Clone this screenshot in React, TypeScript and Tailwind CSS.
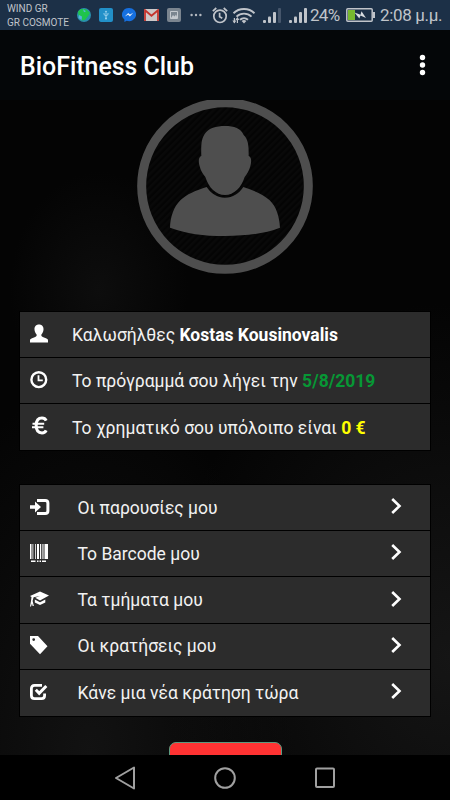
import type { ReactNode } from "react";

function StatusBar() {
  return (
    <div className="h-[30px] bg-[#1c3047] flex items-center pl-[7px] text-[#c0c4ca] shrink-0">
      <div className="w-[70px] text-[10px] leading-[14px] whitespace-nowrap pt-[2px]">
        <p>WIND GR</p>
        <p>GR COSMOTE</p>
      </div>

      <svg className="w-[14px] h-[14px]" viewBox="0 0 14 14">
        <circle cx="7" cy="7" r="7" fill="#2a8fae" />
        <path d="M1 3.4 4 1l5 .2 4 3.6-2 3.4L8 12l-3.6.6L5 9 1.6 7.4z" fill="#1fc44c" />
        <path d="m2 7 3 1.6L4.6 12 1.5 10zM6 1.2l3 2-2 1z" fill="#57b5d8" />
      </svg>
      <svg className="w-[14px] h-[14px] ml-2" viewBox="0 0 14 14">
        <rect width="14" height="14" rx="2" fill="#2290c8" />
        <path d="M7 10.5V3.6M5 5v1.6L7 8l2-1.4V5" fill="none" stroke="#9ed4ee" strokeWidth="0.9" />
        <circle cx="7" cy="10.6" r="1" fill="#9ed4ee" />
        <path d="m5.8 4 1.2-1.6L8.2 4z" fill="#9ed4ee" />
      </svg>
      <svg className="w-[14px] h-[14px] ml-[9px]" viewBox="0 0 14 14">
        <path d="M7 0a7 6.6 0 0 0-4.6 11.6V14l2.3-1.2A7 6.6 0 1 0 7 0z" fill="#1670e0" />
        <path d="m2.8 8.6 3.4-3.7L8 6.6l3.2-1.8L7.9 8.5 6.1 6.8z" fill="#e6edf6" />
      </svg>
      <svg className="w-[15px] h-[12px] ml-2" viewBox="0 0 15 12">
        <rect width="15" height="12" rx="1" fill="#ccc8c8" />
        <path d="M1 12V1.2l6.5 5.6L14 1.2V12" fill="none" stroke="#c4352e" strokeWidth="1.8" />
      </svg>
      <svg className="w-[14px] h-[14px] ml-2" viewBox="0 0 14 14">
        <rect width="14" height="14" rx="2" fill="#7b858f" />
        <path d="M3.5 3.5h7v7h-7z" fill="none" stroke="#c5c9ce" />
        <path d="m4 10 2-3 1.5 1.5L9 6.5l1.5 3.5z" fill="#c5c9ce" />
      </svg>
      <svg className="w-[12px] h-[4px] ml-[9px]" viewBox="0 0 12 4" fill="#b4b9c1">
        <circle cx="1.6" cy="2" r="1.2" />
        <circle cx="6" cy="2" r="1.2" />
        <circle cx="10.4" cy="2" r="1.2" />
      </svg>
      <svg className="w-[16px] h-[17px] ml-[10px]" viewBox="0 0 16 17" fill="none" stroke="#c0c4ca" strokeWidth="1.7">
        <circle cx="8" cy="9.3" r="6.2" />
        <path d="M7.6 5.8v3.9l2.7 1.5M.8 4.1 4.3 1M15.2 4.1 11.7 1" />
      </svg>
      <svg className="w-[24px] h-[17px] ml-1" viewBox="0 0 24 17" fill="none" stroke="#c0c4ca" strokeWidth="1.9">
        <path d="M1.5 6.2a15.3 15.3 0 0 1 21 0M4.5 9.6a11 11 0 0 1 15 0M8 12.7a6 6 0 0 1 8 0" />
        <path d="m12 16.5-2.4-2.4a3.4 3.4 0 0 1 4.8 0z" fill="#c0c4ca" stroke="none" />
        <path d="M2.4 16v-5M5.4 11v5" strokeWidth="1.2" />
        <path d="m.4 13.5 2 3 2-3zM3.4 13l2-3 2 3z" fill="#c0c4ca" stroke="none" />
      </svg>
      <Signal last="#46566b" />
      <Signal last="#c0c4ca" />
      <span className="text-[17px] leading-[30px] ml-[2px] w-[36px] whitespace-nowrap tracking-[-0.7px]">24%</span>
      <svg className="w-[29px] h-[14px]" viewBox="0 0 29 14">
        <rect x=".8" y=".8" width="25.4" height="12.4" rx="1" fill="none" stroke="#c0c4ca" strokeWidth="1.5" />
        <path d="M27 4h2v6h-2z" fill="#c0c4ca" />
        <path d="M2 2h7v10H2z" fill="#77b82e" />
        <path d="m8.5 4.5 6 2.2 1-3.5 4.5 6.8-5.5-2.6-1.2 3.2z" fill="#d8dce0" />
      </svg>
      <span className="text-[17px] leading-[30px] ml-[5px] whitespace-nowrap tracking-[-0.35px]">2:08 μ.μ.</span>
    </div>
  );
}

function Signal({ last }: { last: string }) {
  return (
    <svg className="w-[19px] h-[16px] ml-[7px]" viewBox="0 0 19 16" fill="#c0c4ca">
      <rect x="0" y="13" width="3" height="3" rx="1" />
      <rect x="5" y="9.5" width="3" height="6.5" rx="1" />
      <rect x="10" y="5" width="3" height="11" rx="1" />
      <rect x="15" y="1" width="3" height="15" rx="1" fill={last} />
    </svg>
  );
}

function Avatar() {
  return (
    <svg className="w-[210px] h-[195px] mx-auto -mt-[10px] shrink-0" viewBox="0 0 630 585">
      <defs>
        <pattern id="stripes" width="14" height="14" patternUnits="userSpaceOnUse" patternTransform="rotate(45)">
          <rect width="7" height="14" fill="#090909" />
        </pattern>
      </defs>
      <circle cx="315" cy="288" r="262" fill="url(#stripes)" />
      <circle cx="315" cy="288" r="250" fill="none" stroke="#4e4e4e" strokeWidth="27" />
      <g fill="#4e4e4e">
        <path d="M315 108c27 0 48 7 56 27 12 12 16 28 15 63 9 3 9 17 5 31-4 14-10 24-17 32-10 32-32 54-59 54s-49-22-59-54c-8-9-14-19-17-32-4-14-4-28 5-31-1-35 0-50 10-66 12-18 34-24 61-24z" />
        <path d="M260 291c13 20 32 32 55 32s42-12 55-32c32 11 61 22 79 40 21 20 29 50 31 82-48 18-100 25-165 25s-117-7-165-25c1-32 11-62 31-82 18-18 47-30 79-40z" />
      </g>
    </svg>
  );
}

function Icon({ children }: { children: ReactNode }) {
  return (
    <svg className="w-[20px] h-[20px] shrink-0 mb-[2px]" viewBox="0 0 20 20" fill="#fff">
      {children}
    </svg>
  );
}

const icons = {
  user: (
    <path d="M9 .5C5.9.5 4.300 2.700 4.500 5.500c.1 2.200 1 3.800 2.100 5 .3 1.400-.2 2-1.400 2.500L1.500 14.500C.4 15 0 15.500 0 16.500v2h18v-2c0-1-.4-1.500-1.500-2L12.800 13c-1.200-.5-1.700-1.100-1.400-2.500 1.100-1.200 2-2.800 2.100-5C13.700 2.700 12.100.5 9 .5z" />
  ),
  clock: (
    <g fill="none" stroke="#fff">
      <circle cx="8.8" cy="9.7" r="7.4" strokeWidth="2.4" />
      <path d="M8.500 5.200v5.200h4.300" strokeWidth="1.8" />
    </g>
  ),
  euro: (
    <g fill="none" stroke="#fff">
      <path d="M16.200 4.700C15.400 2.900 14 2.100 12 2.100c-3.800 0-5.800 2.900-5.800 7.400s2 7.400 5.800 7.400c2 0 3.400-.8 4.200-2.600" strokeWidth="3" />
      <path d="M2.500 7.700h11.700M2 11.200h11.400" strokeWidth="1.9" />
    </g>
  ),
  login: (
    <>
      <path d="M0 8.300h5V4.500l6 5.500-6 5.500v-3.800H0z" />
      <path d="M7 3.400h8.200c1.800 0 2.700 1 2.700 2.600v8c0 1.600-.9 2.600-2.700 2.600H7" fill="none" stroke="#fff" strokeWidth="3" />
    </>
  ),
  barcode: (
    <>
      <path d="M0 1h1.500v15H0zM2.500 1h.8v15h-.8zM5 1h.8v15H5zM7 1h2v15H7zM10 1h1v15h-1zM11.800 1h.8v15h-.8zM13.500 1h1v15h-1zM15 1h3v15h-3z" />
      <path d="M1 17.500h4.500V19H1zM7 17.500h1.500V19H7zM9.500 17.500H11V19H9.500zM12 17.500h4V19h-4z" />
    </>
  ),
  cap: (
    <>
      <path d="M0 7 10 2.500 19 6.500 10 11.500 5.200 8.800 10 7 3.600 8.300 2.600 12l1.300 5H2.600L2 14.500 1 17.500H0l1-5.500.5-4z" />
      <path d="M4.800 10.500 10 13.300l5.300-2.900v3L10 16l-5.200-2.600z" />
    </>
  ),
  tag: (
    <path fillRule="evenodd" d="M0 1h8l9.500 10.200L10 19.300 0 8.800zm3.700 2.200a1.400 1.400 0 1 0 0 2.800 1.400 1.400 0 0 0 0-2.800z" />
  ),
  check: (
    <g fill="none" stroke="#fff">
      <path d="M12 3.400H4.500c-2 0-3.100 1.100-3.100 3.100v7c0 2 1.100 3.100 3.100 3.100h7c2 0 3.100-1.100 3.100-3.100v-2" strokeWidth="2.8" />
      <path d="m5.800 7.800 3.400 3.500L16.300 4" strokeWidth="3" />
    </g>
  ),
};

const info = [
  { icon: icons.user, text: "Καλωσήλθες", value: "Kostas Kousinovalis", color: "text-white" },
  { icon: icons.clock, text: "Το πρόγραμμά σου λήγει την", value: "5/8/2019", color: "text-[#079735]" },
  { icon: icons.euro, text: "Το χρηματικό σου υπόλοιπο είναι", value: "0 €", color: "text-[#ffff00]" },
];

const menu = [
  { icon: icons.login, label: "Οι παρουσίες μου" },
  { icon: icons.barcode, label: "Το Barcode μου" },
  { icon: icons.cap, label: "Τα τμήματα μου" },
  { icon: icons.tag, label: "Οι κρατήσεις μου" },
  { icon: icons.check, label: "Κάνε μια νέα κράτηση τώρα" },
];

export default function App() {
  return (
    <div className="w-[450px] h-[800px] flex flex-col overflow-hidden bg-black font-['Roboto',sans-serif]">
      <StatusBar />

      <header className="h-[70px] shrink-0 bg-[#040608] flex items-center justify-between pl-5 pr-6">
        <h1 className="text-white text-[24.9px] font-medium leading-none mt-[4px]">BioFitness Club</h1>
        <svg className="w-[7px] h-[22px]" viewBox="0 0 7 22" fill="#fff">
          <circle cx="3.5" cy="3.5" r="2.7" />
          <circle cx="3.5" cy="11" r="2.7" />
          <circle cx="3.5" cy="18.5" r="2.7" />
        </svg>
      </header>

      <main className="h-[655px] shrink-0 flex flex-col overflow-hidden bg-[#040404] bg-[radial-gradient(ellipse_at_100%_85%,#151515_0%,transparent_45%),radial-gradient(ellipse_at_20%_100%,#121212_0%,transparent_40%),radial-gradient(ellipse_at_22%_29%,#0d0d0d_0%,transparent_18%)]">
        <Avatar />

        <ul className="mx-5 mt-[27px] text-[17.5px] text-[#f2f2f2] bg-[#2c2c2c] shadow-[0_0_0_1px_#000]">
          {info.map((row) => (
            <li key={row.text} className="h-[46.1px] flex items-center pl-[10px] border-b border-black last:border-b-0">
              <Icon>{row.icon}</Icon>
              <p className="ml-[22px] pt-[1px] whitespace-nowrap">
                {row.text} <b className={row.color}>{row.value}</b>
              </p>
            </li>
          ))}
        </ul>

        <ul className="mx-5 mt-[35px] text-[17.5px] text-[#f2f2f2] bg-[#2c2c2c] shadow-[0_0_0_1px_#000]">
          {menu.map((row) => (
            <li key={row.label} className="h-[46.1px] flex items-center pl-[10px] pr-[28px] border-b border-black last:border-b-0">
              <Icon>{row.icon}</Icon>
              <span className="ml-[27.5px] pt-[1px] flex-1 whitespace-nowrap">{row.label}</span>
              <svg className="w-[11px] h-[16px] mb-[3px]" viewBox="0 0 11 16" fill="none" stroke="#fff" strokeWidth="2.6">
                <path d="m1.200 1 7.300 7-7.300 7" />
              </svg>
            </li>
          ))}
        </ul>

        <button className="w-[113px] h-[44px] shrink-0 mx-auto mt-[26px] rounded-[7px] bg-[#ff3333] border border-[#5c9a80]" />
      </main>

      <nav className="flex-1 bg-black flex items-center justify-center gap-[79px]">
        <svg className="w-[20px] h-[24px]" viewBox="0 0 20 24" fill="none" stroke="#a0a0a0" strokeWidth="2" strokeLinejoin="round">
          <path d="M19 1.500v21L1 12z" />
        </svg>
        <svg className="w-[22px] h-[22px]" viewBox="0 0 22 22" fill="none" stroke="#a0a0a0" strokeWidth="2">
          <circle cx="11" cy="11" r="9.8" />
        </svg>
        <svg className="w-[20px] h-[22px]" viewBox="0 0 20 22" fill="none" stroke="#a0a0a0" strokeWidth="2">
          <rect x="1" y="1.5" width="18" height="18.5" rx="1" />
        </svg>
      </nav>
    </div>
  );
}
